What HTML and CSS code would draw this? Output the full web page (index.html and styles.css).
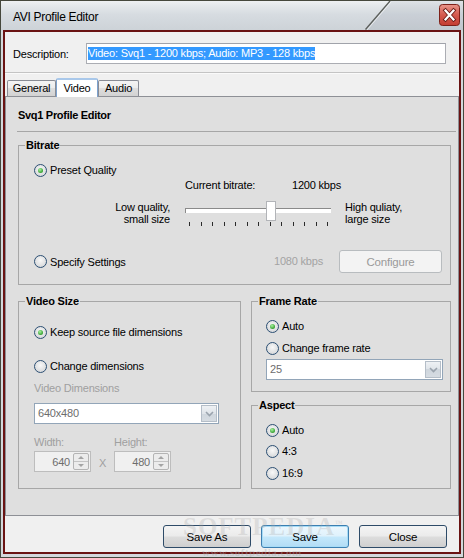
FILE: index.html
```html
<!DOCTYPE html>
<html>
	<head>
		<title>AVI Profile Editor</title>
		<link rel="stylesheet" href="styles.css">
	</head>
	<body>
		<div class="window">
			<div class="titlebar">
				<div class="title-left"><span class="title">AVI Profile Editor</span></div>
				<svg class="title-slant" width="26" height="29" viewBox="0 0 26 29">
					<polygon points="25,0 26,0 26,29 0,29" fill="rgba(40,60,90,0.07)"/>
					<line x1="25" y1="0" x2="0.5" y2="28.5" stroke="#5b5e5a" stroke-width="1.3"/>
					<line x1="26" y1="1" x2="2" y2="29" stroke="#ffffff" stroke-opacity="0.6" stroke-width="1"/>
				</svg>
				<div class="title-right">
					<div class="close-btn">
						<svg width="21" height="22" viewBox="0 0 21 22">
							<defs>
								<linearGradient id="redg" x1="0" y1="0" x2="0" y2="1">
									<stop offset="0" stop-color="#e9968b"/>
									<stop offset="0.5" stop-color="#d4594d"/>
									<stop offset="1" stop-color="#c43d31"/>
								</linearGradient>
							</defs>
							<rect x="0.5" y="0.5" width="20" height="21" rx="3" fill="url(#redg)" stroke="#7d2119"/>
							<path d="M6.5 6.5 L14.5 15.5 M14.5 6.5 L6.5 15.5" stroke="#6a1c15" stroke-width="4" stroke-linecap="square"/>
							<path d="M6.5 6.5 L14.5 15.5 M14.5 6.5 L6.5 15.5" stroke="#ffffff" stroke-width="2.2" stroke-linecap="square"/>
						</svg>
					</div>
				</div>
			</div>

			<div class="frame">
				<div class="desc-row">
					<span class="desc-label">Description:</span>
					<div class="desc-input"><span class="selected">Video: Svq1 - 1200 kbps; Audio: MP3 - 128 kbps</span></div>
				</div>
				<div class="sep"></div>

				<div class="tabs">
					<div class="tab tab-general">General</div>
					<div class="tab tab-video active">Video</div>
					<div class="tab tab-audio">Audio</div>
				</div>

				<div class="panel">
					<div class="editor-title">Svq1 Profile Editor</div>
					<div class="title-rule"></div>

					<fieldset class="group bitrate">
						<legend>Bitrate</legend>
						<div class="radio-row preset">
							<span class="radio checked"></span><span>Preset Quality</span>
						</div>
						<div class="rate-grid">
							<div class="current">
								<span class="current-label">Current bitrate:</span>
								<span>1200 kbps</span>
							</div>
							<div class="low-label">Low quality,<br>small size</div>
							<div class="slider">
								<div class="track"></div>
								<div class="thumb"></div>
								<div class="ticks">
									<i></i><i></i><i></i><i></i><i></i><i></i><i></i>
									<i></i><i></i><i></i><i></i><i></i><i></i>
								</div>
							</div>
							<div class="high-label">High quliaty,<br>large size</div>
						</div>
						<div class="specify-row">
							<span class="radio"></span><span>Specify Settings</span>
							<span class="kbps-muted">1080 kbps</span>
							<div class="btn-configure">Configure</div>
						</div>
					</fieldset>

					<div class="lower">
						<fieldset class="group videosize">
							<legend>Video Size</legend>
							<div class="radio-row keep">
								<span class="radio checked"></span><span>Keep source file dimensions</span>
							</div>
							<div class="radio-row change">
								<span class="radio"></span><span>Change dimensions</span>
							</div>
							<div class="muted-label">Video Dimensions</div>
							<div class="combo combo-dims">
								<span class="combo-text">640x480</span>
								<span class="combo-btn"><svg width="9" height="6" viewBox="0 0 9 6"><path d="M1 1 L4.5 4.5 L8 1" fill="none" stroke="#9aa3ad" stroke-width="1.6"/></svg></span>
							</div>
							<div class="dim-labels">
								<span class="dim-label-w">Width:</span>
								<span>Height:</span>
							</div>
							<div class="dim-row">
								<div class="spin">
									<span class="spin-text">640</span>
									<span class="spin-btn"><span class="up"></span><span class="down"></span></span>
								</div>
								<span class="times">X</span>
								<div class="spin">
									<span class="spin-text">480</span>
									<span class="spin-btn"><span class="up"></span><span class="down"></span></span>
								</div>
							</div>
						</fieldset>

						<div class="side">
							<fieldset class="group framerate">
								<legend>Frame Rate</legend>
								<div class="radio-row fr-auto">
									<span class="radio checked"></span><span>Auto</span>
								</div>
								<div class="radio-row fr-change">
									<span class="radio"></span><span>Change frame rate</span>
								</div>
								<div class="combo combo-fps">
									<span class="combo-text">25</span>
									<span class="combo-btn"><svg width="9" height="6" viewBox="0 0 9 6"><path d="M1 1 L4.5 4.5 L8 1" fill="none" stroke="#9aa3ad" stroke-width="1.6"/></svg></span>
								</div>
							</fieldset>

							<fieldset class="group aspect">
								<legend>Aspect</legend>
								<div class="radio-row as-auto">
									<span class="radio checked"></span><span>Auto</span>
								</div>
								<div class="radio-row as-43">
									<span class="radio"></span><span>4:3</span>
								</div>
								<div class="radio-row as-169">
									<span class="radio"></span><span>16:9</span>
								</div>
							</fieldset>
						</div>
					</div>
				</div>

				<div class="buttons">
					<div class="btn">Save As</div>
					<div class="btn default">Save</div>
					<div class="btn">Close</div>
				</div>
			</div>

			<div class="watermark">SOFTPEDIA<sup>™</sup></div>
			<div class="watermark-url">www.softpedia.com</div>
		</div>
	</body>
</html>
```

FILE: styles.css
```css
* {
	box-sizing: border-box;
}

body {
	margin: 0;
	font-family: "Liberation Sans", Arial, sans-serif;
	font-size: 11px;
	letter-spacing: -0.2px;
	color: #000;
}

.window {
	position: relative;
	width: 464px;
	height: 558px;
	border: 1px solid #45473c;
	background: #d3d8dc;
	display: flex;
	flex-direction: column;
	overflow: hidden;
}

/* title bar */
.titlebar {
	height: 29px;
	display: flex;
	background: linear-gradient(#eef0f2 0px, #e3e7ea 5px, #d6dbe0 14px, #cdd3d8 29px);
}
.title-left {
	width: 364px;
	display: flex;
	align-items: center;
	padding-left: 12px;
}
.title {
	font-size: 12px;
	letter-spacing: -0.3px;
	color: #000;
	margin-top: 2px;
}
.title-slant {
	display: block;
	flex: none;
}
.title-right {
	flex: 1;
	display: flex;
	justify-content: flex-end;
	background: rgba(40, 60, 90, 0.07);
	padding: 3px 3px 0 0;
}
.close-btn {
	width: 21px;
	height: 22px;
}
.close-btn svg {
	display: block;
}

/* client area */
.frame {
	flex: 1;
	margin: 0 2px 3px 2px;
	border: 2px solid #6a1313;
	background: #f0f0f0;
	display: flex;
	flex-direction: column;
}

.desc-row {
	display: flex;
	align-items: center;
	height: 21px;
	margin: 11px 0 0 8px;
}
.desc-label {
	width: 73px;
}
.desc-input {
	width: 360px;
	height: 21px;
	border: 1px solid #abadb3;
	border-top-color: #a0a3aa;
	background: #fff;
	padding-left: 1px;
	display: flex;
	align-items: center;
}
.selected {
	background: #3399ff;
	color: #fff;
	line-height: 13px;
}

.sep {
	margin-top: 8px;
	height: 2px;
	border-top: 1px solid #c4c4c4;
	border-bottom: 1px solid #fafafa;
}

/* tabs */
.tabs {
	display: flex;
	align-items: flex-end;
	height: 20px;
	margin-top: 2px;
	padding-left: 2px;
}
.tab {
	height: 16px;
	border: 1px solid #898c95;
	border-bottom: none;
	border-radius: 2px 2px 0 0;
	background: linear-gradient(#f4f4f4, #ececec 50%, #dedede 50%, #d2d2d2);
	text-align: center;
	line-height: 15px;
}
.tab-general {
	width: 49px;
}
.tab-video {
	width: 42px;
}
.tab-audio {
	width: 41px;
}
.tab.active {
	position: relative;
	height: 19px;
	margin-bottom: -1px;
	background: #fff;
	border-color: #7da2ce;
	border-top: 2px solid #a9c8ea;
	line-height: 17px;
}

.panel {
	height: 420px;
	border: 1px solid #8e9096;
	background: #dfdfdf;
}

.editor-title {
	font-weight: bold;
	line-height: 14px;
	margin: 11px 0 0 12px;
	letter-spacing: -0.3px;
}
.title-rule {
	margin: 9px 2px 0 11px;
	border-top: 1px solid #a6a6a6;
}

/* group boxes */
fieldset.group {
	padding: 0;
	min-width: 0;
	border: 1px solid #a7a7a7;
}
fieldset.group legend {
	padding: 0 1px;
	margin-left: 6px;
	font-weight: bold;
	line-height: 14px;
	letter-spacing: -0.2px;
}

.radio-row {
	display: flex;
	align-items: center;
	height: 14px;
	gap: 3px;
}
.radio {
	width: 13px;
	height: 13px;
	border-radius: 50%;
	border: 1px solid #2c4f73;
	background: radial-gradient(circle at 50% 40%, #f8f8f8, #d6d8da 80%);
	display: flex;
	align-items: center;
	justify-content: center;
	flex: none;
}
.radio.checked::after {
	content: "";
	width: 5px;
	height: 5px;
	border-radius: 50%;
	background: radial-gradient(circle at 40% 35%, #a8f3a0, #2e9a2a 75%);
}

fieldset.bitrate {
	width: 433px;
	height: 147px;
	margin: 6px 0 0 12px;
}
.preset {
	margin: 11px 0 0 15px;
}

.rate-grid {
	display: grid;
	grid-template-columns: 166px 146px auto;
	row-gap: 9px;
	margin-top: 1px;
}
.current {
	grid-column: 2 / 4;
	display: flex;
	line-height: 14px;
}
.current-label {
	width: 107px;
}
.low-label {
	text-align: right;
	padding-right: 15px;
	line-height: 12px;
}
.high-label {
	padding-left: 14px;
	line-height: 12px;
}

.slider {
	position: relative;
	height: 26px;
}
.track {
	margin-top: 7px;
	height: 5px;
	border-top: 1px solid #8a8a8a;
	border-left: 1px solid #8a8a8a;
	background: #fff;
}
.thumb {
	position: absolute;
	left: 81px;
	top: 0;
	width: 10px;
	height: 20px;
	border: 1px solid #b2b4b8;
	background: #fff;
}
.ticks {
	display: flex;
	justify-content: space-between;
	margin-top: 9px;
	padding: 0 3px 0 4px;
}
.ticks i {
	width: 1px;
	height: 4px;
	background: #2a2a2a;
}

.specify-row {
	display: flex;
	align-items: center;
	height: 23px;
	margin-top: 23px;
	padding-left: 15px;
	gap: 3px;
}
.kbps-muted {
	margin-left: auto;
	margin-right: 13px;
	color: #a3a3a3;
	margin-top: -2px;
}
.btn-configure {
	width: 103px;
	height: 23px;
	margin-right: 8px;
	border: 1px solid #b8bcbf;
	border-radius: 3px;
	background: #f3f3f3;
	color: #9a9a9a;
	font-size: 11.5px;
	display: flex;
	align-items: center;
	justify-content: center;
}

/* lower groups */
.lower {
	display: flex;
	gap: 10px;
	margin: 9px 0 0 12px;
}
fieldset.videosize {
	width: 223px;
	height: 195px;
	margin: 0;
}
.side {
	display: flex;
	flex-direction: column;
	gap: 6px;
}
fieldset.framerate {
	width: 200px;
	height: 98px;
	margin: 0;
}
fieldset.aspect {
	width: 200px;
	height: 91px;
	margin: 0;
}

.keep {
	margin: 17px 0 0 15px;
}
.change {
	margin: 20px 0 0 15px;
}
.muted-label {
	margin: 8px 0 0 15px;
	line-height: 14px;
	color: #a0a0a0;
}

.combo {
	display: flex;
	height: 21px;
	border: 1px solid #92a5b8;
	background: #fff;
}
.combo-text {
	flex: 1;
	padding-left: 3px;
	line-height: 19px;
	color: #6d6d6d;
}
.combo-btn {
	width: 16px;
	margin: 1px;
	border: 1px solid #b5bec8;
	background: linear-gradient(#eef1f4, #dfe4e9 50%, #cfd6dd 50%, #d6dce2);
	display: flex;
	align-items: center;
	justify-content: center;
}
.combo-btn svg {
	display: block;
}
.combo-dims {
	width: 185px;
	margin: 8px 0 0 15px;
}

.dim-labels {
	display: flex;
	margin: 11px 0 0 15px;
	line-height: 14px;
	color: #a0a0a0;
}
.dim-label-w {
	width: 80px;
}
.dim-row {
	display: flex;
	align-items: center;
	margin: 2px 0 0 15px;
}
.spin {
	width: 57px;
	height: 21px;
	border: 1px solid #bdbdbd;
	background: #f0f0f0;
	display: flex;
	align-items: center;
	padding: 1px;
}
.spin-text {
	flex: 1;
	text-align: right;
	padding-right: 3px;
	color: #6d6d6d;
}
.spin-btn {
	width: 16px;
	height: 17px;
	display: flex;
	flex-direction: column;
	border: 1px solid #b4b4b4;
	border-radius: 2px;
	background: #ececec;
}
.spin-btn span {
	flex: 1;
	display: flex;
	align-items: center;
	justify-content: center;
}
.spin-btn .up {
	border-bottom: 1px solid #c4c4c4;
}
.spin-btn .up::after {
	content: "";
	border: 3px solid transparent;
	border-bottom: 3px solid #a4a4a4;
	border-top: none;
}
.spin-btn .down::after {
	content: "";
	border: 3px solid transparent;
	border-top: 3px solid #a4a4a4;
	border-bottom: none;
}
.times {
	width: 23px;
	text-align: center;
	color: #a0a0a0;
	margin-top: 2px;
}

.fr-auto {
	margin: 11px 0 0 14px;
}
.fr-change {
	margin: 8px 0 0 14px;
}
.combo-fps {
	width: 177px;
	margin: 4px 0 0 14px;
}

.as-auto {
	margin: 11px 0 0 14px;
}
.as-43 {
	margin: 7px 0 0 14px;
}
.as-169 {
	margin: 8px 0 0 14px;
}

/* dialog buttons */
.buttons {
	display: flex;
	justify-content: flex-end;
	gap: 10px;
	margin: 9px 12px 0 0;
}
.btn {
	width: 88px;
	height: 23px;
	border: 1px solid #2e4b68;
	border-radius: 3px;
	background: linear-gradient(#f4f4f4, #ebebeb 48%, #dddddd 52%, #cfcfcf);
	display: flex;
	align-items: center;
	justify-content: center;
	font-size: 11.5px;
}
.btn.default {
	border-color: #3c7fb1;
	background: linear-gradient(#edf7fd, #dff2fc 48%, #c4e8fb 52%, #b2dcf5);
	box-shadow: inset 0 0 0 1px #a8dcf6;
}

.watermark {
	position: absolute;
	left: 182px;
	top: 512px;
	font-family: "Liberation Serif", serif;
	font-weight: bold;
	font-size: 25px;
	letter-spacing: 1px;
	color: rgba(170, 170, 170, 0.28);
}
.watermark sup {
	font-size: 8px;
}
.watermark-url {
	position: absolute;
	left: 201px;
	top: 545px;
	font-family: "Liberation Serif", serif;
	font-weight: bold;
	font-size: 11px;
	letter-spacing: 0.5px;
	color: rgba(170, 170, 170, 0.4);
}
```
